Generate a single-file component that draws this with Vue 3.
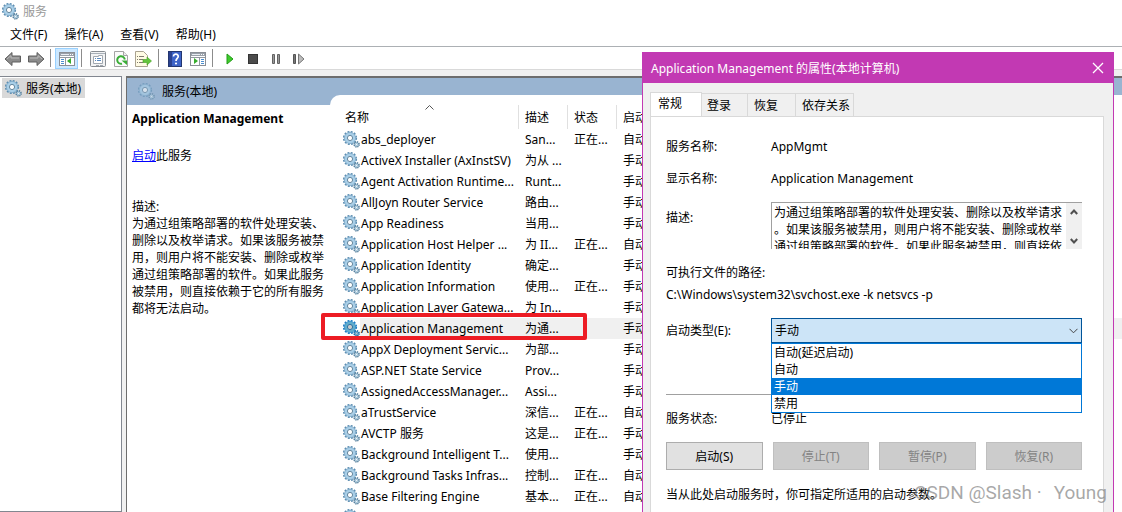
<script setup>
import { ref } from 'vue'

const menus = ['文件(F)', '操作(A)', '查看(V)', '帮助(H)']

const services = [
  ['abs_deployer', 'San...', '正在...', '自动'],
  ['ActiveX Installer (AxInstSV)', '为从 ...', '', '手动'],
  ['Agent Activation Runtime...', 'Runt...', '', '手动'],
  ['AllJoyn Router Service', '路由...', '', '手动'],
  ['App Readiness', '当用...', '', '手动'],
  ['Application Host Helper ...', '为 II...', '正在...', '自动'],
  ['Application Identity', '确定...', '', '手动'],
  ['Application Information', '使用...', '正在...', '手动'],
  ['Application Layer Gatewa...', '为 In...', '', '手动'],
  ['Application Management', '为通...', '', '手动'],
  ['AppX Deployment Servic...', '为部...', '', '手动'],
  ['ASP.NET State Service', 'Prov...', '', '手动'],
  ['AssignedAccessManager...', 'Assi...', '', '手动'],
  ['aTrustService', '深信...', '正在...', '自动'],
  ['AVCTP 服务', '这是...', '正在...', '手动'],
  ['Background Intelligent T...', '使用...', '', '手动'],
  ['Background Tasks Infras...', '控制...', '正在...', '自动'],
  ['Base Filtering Engine', '基本...', '正在...', '自动'],
  ['', '', '', ''],
]
const selected = ref(9)

const description =
  '为通过组策略部署的软件处理安装、删除以及枚举请求。如果该服务被禁用，则用户将不能安装、删除或枚举通过组策略部署的软件。如果此服务被禁用，则直接依赖于它的所有服务都将无法启动。'

const tabs = ['常规', '登录', '恢复', '依存关系']
const activeTab = ref(0)
const startTypes = ['自动(延迟启动)', '自动', '手动', '禁用']
const startType = ref('手动')
</script>

<template>
  <div class="window">
    <svg class="defs" aria-hidden="true">
      <symbol id="gear" viewBox="0 0 17 17">
        <circle cx="7" cy="7" r="6.1" fill="none" stroke="#5f8fb2" stroke-width="2" stroke-dasharray="1.9 1.29" />
        <circle cx="7" cy="7" r="4.2" fill="#fff" stroke="#a9cfe8" stroke-width="3.200" />
        <circle cx="7" cy="7" r="5.6" fill="none" stroke="#7ba6c5" stroke-width="0.7" />
        <circle cx="7" cy="7" r="2.6" fill="#fff" stroke="#64869e" stroke-width="1" />
        <circle cx="13.6" cy="13.4" r="2.5" fill="#b8d5e6" stroke="#5a819d" stroke-width="1.600" stroke-dasharray="1.2 0.76" />
        <circle cx="13.6" cy="13.4" r="1" fill="#fff" stroke="#8eb2c9" stroke-width="0.7" />
      </symbol>
    </svg>

    <header class="titlebar">
      <svg class="gear"><use href="#gear" /></svg>
      <span>服务</span>
    </header>

    <nav class="menubar">
      <button v-for="m in menus" :key="m" type="button">{{ m }}</button>
    </nav>

    <div class="toolbar">
      <button type="button" class="tool" aria-label="后退">
        <svg width="18" height="16" viewBox="0 0 18 16"><path d="M1 8 8 1.500V5h8.500v6H8v3.500z" fill="#8b8b8b" stroke="#5e5e5e" /><path d="M3 8 7 4.500V7h8" fill="none" stroke="#b9b9b9" /></svg>
      </button>
      <button type="button" class="tool" aria-label="前进">
        <svg width="18" height="16" viewBox="0 0 18 16"><path d="M17 8 10 1.500V5H1.500v6H10v3.500z" fill="#8b8b8b" stroke="#5e5e5e" /><path d="M15 8 11 4.500V7H3" fill="none" stroke="#b9b9b9" /></svg>
      </button>
      <i class="sep"></i>
      <button type="button" class="tool pressed" aria-label="显示控制台树">
        <svg width="16" height="14" viewBox="0 0 16 14"><rect x=".5" y=".5" width="15" height="13" fill="#fff" stroke="#8b8f96" /><path d="M1 1h14v3H1z" fill="#9aa1aa" /><path d="M2 2.500h8" stroke="#e9edf2" /><path d="M11 2.500h1m1 0h1" stroke="#fff" /><path d="M1 5.500h14M6.500 5v8" stroke="#9298a0" /><path d="M2 7.500h3m-3 2h3m-3 2h3" stroke="#4c8fd0" /><path d="M12 6v6L8 9z" fill="#35ad2c" /></svg>
      </button>
      <i class="sep"></i>
      <button type="button" class="tool" aria-label="属性">
        <svg width="16" height="16" viewBox="0 0 16 16"><rect x=".5" y=".5" width="15" height="15" rx="1" fill="#f2f3f4" stroke="#878c92" /><path d="M1 2.500h14" stroke="#a8b0b8" /><path d="M3.500 5.500h5v-1h4v8h-9z" fill="#fff" stroke="#a1a8b0" /><path d="M5 7.500h1m1 0h4m-6 2h1m1 0h4" stroke="#5b8bc0" /><path d="M6 14.500h3m1 0h3" stroke="#a1a8b0" /></svg>
      </button>
      <button type="button" class="tool" aria-label="刷新">
        <svg width="14" height="16" viewBox="0 0 14 16"><path d="M.5.5h9l4 4v11H.5z" fill="#fbfbfb" stroke="#a4a4a4" /><path d="M9.500.5v4h4" fill="#eee" stroke="#a4a4a4" /><path d="M10.800 8.500A3.800 3.800 0 1 0 8 12.700" fill="none" stroke="#39ad36" stroke-width="2" /><path d="M7.500 9.500h5.500v4.500z" fill="#39ad36" /></svg>
      </button>
      <button type="button" class="tool" aria-label="导出列表">
        <svg width="17" height="16" viewBox="0 0 17 16"><path d="M.5.5h8l4 4v11H.5z" fill="#fffbe4" stroke="#aaa390" /><path d="M2 5.500h1m1 0h5m-7 3h1m1 0h4m-6 3h1m1 0h4" stroke="#807b70" /><path d="M8 8.500h4V6l4.500 4-4.500 4v-2.500H8z" fill="#64c43d" stroke="#43a022" stroke-width=".6" /></svg>
      </button>
      <i class="sep"></i>
      <button type="button" class="tool" aria-label="帮助">
        <svg width="14" height="16" viewBox="0 0 14 16"><rect x=".5" y=".5" width="13" height="15" fill="#3d63c7" stroke="#23366f" /><path d="M1 1h3v14H1z" fill="#2a4190" /><path d="M5.500 5.500C5.500 2.200 10.500 2.500 10.200 5.500 10 7.500 8 7.300 8 10" fill="none" stroke="#fff" stroke-width="1.700" /><circle cx="8" cy="12.500" r="1.100" fill="#fff" /></svg>
      </button>
      <button type="button" class="tool" aria-label="操作窗格">
        <svg width="16" height="14" viewBox="0 0 16 14"><rect x=".5" y=".5" width="15" height="13" fill="#fff" stroke="#8b8f96" /><path d="M1 1h14v3H1z" fill="#9aa1aa" /><path d="M2 2.500h8" stroke="#e9edf2" /><path d="M11 2.500h1m1 0h1" stroke="#fff" /><path d="M1 5.500h14M9.500 5v8" stroke="#9298a0" /><path d="M11 7.500h3m-3 2h3m-3 2h3" stroke="#4c8fd0" /><path d="M4 6v6l4-3z" fill="#35ad2c" /></svg>
      </button>
      <i class="sep"></i>
      <div class="controls">
        <button type="button" class="tool" aria-label="启动服务">
          <svg width="8" height="12" viewBox="0 0 8 12"><path d="M1 1v10l6-5z" fill="#3ecb2c" stroke="#239c17" /></svg>
        </button>
        <button type="button" class="tool" aria-label="停止服务">
          <svg width="10" height="10" viewBox="0 0 10 10"><rect x=".5" y=".5" width="9" height="9" fill="#4b4b4b" stroke="#343434" /></svg>
        </button>
        <button type="button" class="tool" aria-label="暂停服务">
          <svg width="8" height="10" viewBox="0 0 8 10"><path d="M.5.5h2v9h-2zM5.500.5h2v9h-2z" fill="#9a9a9a" stroke="#626262" /></svg>
        </button>
        <button type="button" class="tool" aria-label="重新启动服务">
          <svg width="12" height="12" viewBox="0 0 12 12"><path d="M.5 1.500h2v9h-2z" fill="#777" stroke="#555" /><path d="M5.500 1v10L11 6z" fill="#bcbcbc" stroke="#777" /></svg>
        </button>
      </div>
    </div>

    <main class="body">
      <aside class="tree">
        <button type="button" class="node">
          <svg class="gear"><use href="#gear" /></svg>
          <span>服务(本地)</span>
        </button>
      </aside>

      <section class="pane">
        <div class="pane-head">
          <svg class="gear faded"><use href="#gear" /></svg>
          <span>服务(本地)</span>
        </div>
        <div class="pane-body">
          <div class="detail">
            <h2>Application Management</h2>
            <p class="action"><a href="#">启动</a>此服务</p>
            <p>描述:</p>
            <p>{{ description }}</p>
          </div>

          <div class="list">
            <table>
              <colgroup>
                <col class="c-name" /><col class="c-small" /><col class="c-small" /><col />
              </colgroup>
              <thead>
                <tr>
                  <th class="name-head">
                    名称
                    <svg class="sort" width="9" height="5" viewBox="0 0 9 5"><path d="M.5 4.500l4-4 4 4" fill="none" stroke="#555" /></svg>
                  </th>
                  <th>描述</th>
                  <th>状态</th>
                  <th>启动类型</th>
                </tr>
              </thead>
              <tbody>
                <tr v-for="(s, i) in services" :key="i" :class="{ current: i === selected }" @click="selected = i">
                  <td>
                    <div class="name">
                      <svg class="gear"><use href="#gear" /></svg>
                      <span>{{ s[0] }}</span>
                    </div>
                  </td>
                  <td>{{ s[1] }}</td>
                  <td>{{ s[2] }}</td>
                  <td>{{ s[3] }}</td>
                </tr>
              </tbody>
            </table>
            <div class="marker"></div>
          </div>
        </div>
      </section>
    </main>

    <section class="dialog" role="dialog" aria-labelledby="dlg-title">
      <header class="dlg-bar">
        <span id="dlg-title">Application Management 的属性(本地计算机)</span>
        <button type="button" aria-label="关闭">
          <svg width="12" height="12" viewBox="0 0 12 12"><path d="M1 1l10 10M11 1L1 11" stroke="#fff" stroke-width="1.300" /></svg>
        </button>
      </header>
      <div class="dlg-body">
        <div class="tabs" role="tablist">
          <button
            v-for="(t, i) in tabs"
            :key="t"
            type="button"
            role="tab"
            :aria-selected="i === activeTab"
            :class="{ active: i === activeTab }"
            @click="activeTab = i"
          >{{ t }}</button>
        </div>
        <div class="page">
          <div class="field">
            <span>服务名称:</span><span>AppMgmt</span>
          </div>
          <div class="field">
            <span>显示名称:</span><span>Application Management</span>
          </div>
          <div class="field desc">
            <label for="desc">描述:</label>
            <div class="memo">
              <textarea id="desc" readonly :value="description"></textarea>
              <div class="scroll">
                <button type="button" aria-label="向上滚动"><svg width="8" height="6" viewBox="0 0 8 6"><path d="M.8 5L4 1.500 7.200 5" fill="none" stroke="#505050" stroke-width="2" /></svg></button>
                <button type="button" aria-label="向下滚动"><svg width="8" height="6" viewBox="0 0 8 6"><path d="M.8 1L4 4.500 7.200 1" fill="none" stroke="#505050" stroke-width="2" /></svg></button>
              </div>
            </div>
          </div>
          <div class="path">
            <p>可执行文件的路径:</p>
            <p>C:\Windows\system32\svchost.exe -k netsvcs -p</p>
          </div>
          <div class="field start">
            <label for="start">启动类型(E):</label>
            <div class="combo">
              <select id="start" v-model="startType">
                <option v-for="o in startTypes" :key="o">{{ o }}</option>
              </select>
              <svg class="arrow" width="9" height="6" viewBox="0 0 9 6"><path d="M.5.8l4 4 4-4" fill="none" stroke="#444" /></svg>
              <ul class="options" role="listbox">
                <li
                  v-for="o in startTypes"
                  :key="o"
                  role="option"
                  :aria-selected="o === startType"
                  :class="{ on: o === startType }"
                  @click="startType = o"
                >{{ o }}</li>
              </ul>
            </div>
          </div>
          <hr />
          <div class="field">
            <span>服务状态:</span><span>已停止</span>
          </div>
          <div class="buttons">
            <button type="button">启动(S)</button>
            <button type="button" disabled>停止(T)</button>
            <button type="button" disabled>暂停(P)</button>
            <button type="button" disabled>恢复(R)</button>
          </div>
          <p class="note">当从此处启动服务时，你可指定所适用的启动参数。</p>
        </div>
      </div>
    </section>

    <div class="watermark"><span>CSDN @Slash ·</span><span>Young</span></div>
  </div>
</template>

<style>
html, body { margin: 0; overflow: hidden; }
</style>

<style scoped>
.window {
  position: relative;
  display: flex;
  flex-direction: column;
  height: 100vh;
  overflow: hidden;
  background: #f0f0f0;
  color: #000;
  font: 12px/17px "Noto Sans", "Noto Sans CJK SC", sans-serif;
}
.window * { box-sizing: border-box; }
.defs { position: absolute; width: 0; height: 0; }
button, select, textarea { margin: 0; font: inherit; color: inherit; }
button { padding: 0; border: 0; background: none; white-space: nowrap; }
p, h2, ul { margin: 0; padding: 0; }
svg { display: block; flex: none; }
.gear { width: 17px; height: 17px; }

.titlebar {
  display: flex;
  align-items: center;
  gap: 4px;
  height: 22px;
  flex: none;
  padding-left: 2px;
  background: #fff;
  color: #999;
}
.menubar {
  display: flex;
  gap: 17px;
  height: 25px;
  flex: none;
  padding-left: 10px;
  background: #fff;
  border-bottom: 1px solid #acb0b4;
}
.toolbar {
  display: flex;
  align-items: flex-end;
  height: 23px;
  flex: none;
  padding-left: 1px;
  background: #fff;
  border-bottom: 1px solid #d9d9d9;
}
.tool {
  display: flex;
  align-items: center;
  justify-content: center;
  width: 23px;
  height: 21px;
}
.pressed { background: #cce8ff; border: 1px solid #99d1ff; }
.sep { align-self: center; width: 1px; height: 18px; margin: 0 4px 0 3px; background: #8c8c8c; }
.controls { display: flex; padding-left: 1px; }

.body { display: flex; flex: 1; gap: 4px; min-height: 0; padding-top: 6px; }
.tree {
  width: 122px;
  flex: none;
  padding: 1px 2px;
  background: #fff;
  border: 1px solid #828790;
  border-left: 0;
}
.node {
  display: flex;
  align-items: center;
  gap: 4px;
  height: 20px;
  padding: 0 4px 0 3px;
  background: #d9d9d9;
}
.pane {
  display: flex;
  flex-direction: column;
  flex: 1;
  min-width: 0;
  background: #fff;
  border-top: 2px solid #6d6d6d;
  border-left: 1px solid #6d6d6d;
}
.pane-head {
  display: flex;
  align-items: center;
  gap: 7px;
  height: 27px;
  flex: none;
  padding-left: 11px;
  background: #99b4d1;
}
.faded { opacity: 0.6; }
.pane-body { display: flex; flex: 1; min-height: 0; }
.detail { width: 203px; flex: none; padding: 5px 6px 0 5px; }
.detail h2 { font-size: 12px; line-height: 17px; white-space: nowrap; }
.action { margin: 20px 0 34px; }
.action a { color: #0000ff; }
.list {
  position: relative;
  flex: 1;
  min-width: 0;
  margin-top: -10px;
  padding-top: 10px;
  background: #fff;
  border-top-left-radius: 10px;
}
table { width: 100%; table-layout: fixed; border-collapse: separate; border-spacing: 0; }
.c-name { width: 189px; }
.c-small { width: 49px; }
th {
  height: 24px;
  padding: 0 0 0 6px;
  border-right: 1px solid #e0e0e0;
  font-weight: normal;
  text-align: left;
  white-space: nowrap;
}
th:first-child { padding-left: 15px; }
th:last-child { border-right: 0; }
.name-head { position: relative; }
.sort { position: absolute; top: 0; left: 95px; }
td { height: 21px; padding: 0 0 0 6px; white-space: nowrap; overflow: hidden; }
td:first-child { padding: 0 0 0 13px; }
.name { display: flex; align-items: center; height: 21px; }
.name span { flex: 1; height: 21px; padding-left: 1px; line-height: 21px; }
.current td:not(:first-child), .current .name span { background: #f0f0f0; }
.current .gear { filter: saturate(2.5) brightness(0.8); }
.marker {
  position: absolute;
  top: 218px;
  left: -9px;
  width: 266px;
  height: 27px;
  border: 4px solid #ed1c24;
  border-radius: 2px;
  pointer-events: none;
}

.dialog {
  position: absolute;
  top: 52px;
  right: 8px;
  bottom: 0;
  display: flex;
  flex-direction: column;
  width: 472px;
  background: #f0f0f0;
  border: 1px solid #c239b3;
  border-bottom: 0;
}
.dlg-bar {
  display: flex;
  align-items: center;
  justify-content: space-between;
  height: 30px;
  flex: none;
  padding: 0 9px 0 8px;
  background: #c239b3;
  color: #fff;
}
.dlg-body {
  display: flex;
  flex: 1;
  flex-direction: column;
  min-height: 0;
  padding: 9px 9px 0 7px;
}
.tabs { display: flex; align-items: flex-end; flex: none; }
.tabs button {
  height: 23px;
  padding: 0 17px 0 6px;
  border: 1px solid #d9d9d9;
  border-left: 0;
  border-bottom: 0;
}
.tabs button:nth-child(2) { padding: 0 16px 0 5px; }
.tabs button:last-child { padding: 0 3px 0 6px; }
.tabs .active {
  height: 25px;
  margin-bottom: -1px;
  padding: 0 19px 3px 7px;
  border-left: 1px solid #d9d9d9;
  background: #fff;
}
.page {
  display: flex;
  flex: 1;
  flex-direction: column;
  gap: 15px;
  min-height: 0;
  padding: 21px 21px 0 15px;
  border: 1px solid #d9d9d9;
  border-bottom: 0;
  background: #fff;
}
.field { display: grid; grid-template-columns: 105px 1fr; flex: none; }
.desc { align-items: start; }
.desc label { padding-top: 7px; }
.memo {
  display: flex;
  height: 47px;
  border-top: 1px solid #a0a0a0;
  border-left: 1px solid #a0a0a0;
}
textarea {
  display: block;
  flex: 1;
  min-width: 0;
  height: 100%;
  padding: 1px 3px 0 2px;
  border: 0;
  resize: none;
  overflow: hidden;
  background: #fff;
  line-height: 17px;
  line-break: anywhere;
}
.scroll {
  display: flex;
  flex-direction: column;
  justify-content: space-between;
  width: 16px;
  background: #f0f0f0;
}
.scroll button { display: grid; place-items: center; height: 17px; }
.path p + p { margin-top: 5px; }
.start { align-items: center; }
.combo { position: relative; }
select {
  display: block;
  width: 100%;
  height: 25px;
  padding: 0 3px;
  appearance: none;
  border: 1px solid #005499;
  border-radius: 0;
  background: #cce4f7;
}
.arrow { position: absolute; top: 10px; right: 4px; pointer-events: none; }
.options {
  position: absolute;
  top: 25px;
  left: 0;
  right: 0;
  list-style: none;
  background: #fff;
  border: 1px solid #0078d7;
}
.options li { padding-left: 2px; }
.options .on { background: #0078d7; color: #fff; }
hr { width: 100%; height: 1px; margin: 36px 0 0; border: 0; background: #a0a0a0; flex: none; }
.buttons {
  display: grid;
  grid-template-columns: repeat(4, 1fr);
  gap: 10px;
  flex: none;
}
.buttons button { height: 28px; border: 1px solid #adadad; background: #e1e1e1; }
.buttons button:disabled { border-color: #bfbfbf; background: #ccc; color: #838383; }
.note { padding-top: 1px; }

.watermark {
  position: absolute;
  right: 15px;
  bottom: 8px;
  display: flex;
  gap: 12px;
  color: rgba(110, 110, 110, 0.6);
  font: 19px/22px Roboto, sans-serif;
  pointer-events: none;
}
</style>
